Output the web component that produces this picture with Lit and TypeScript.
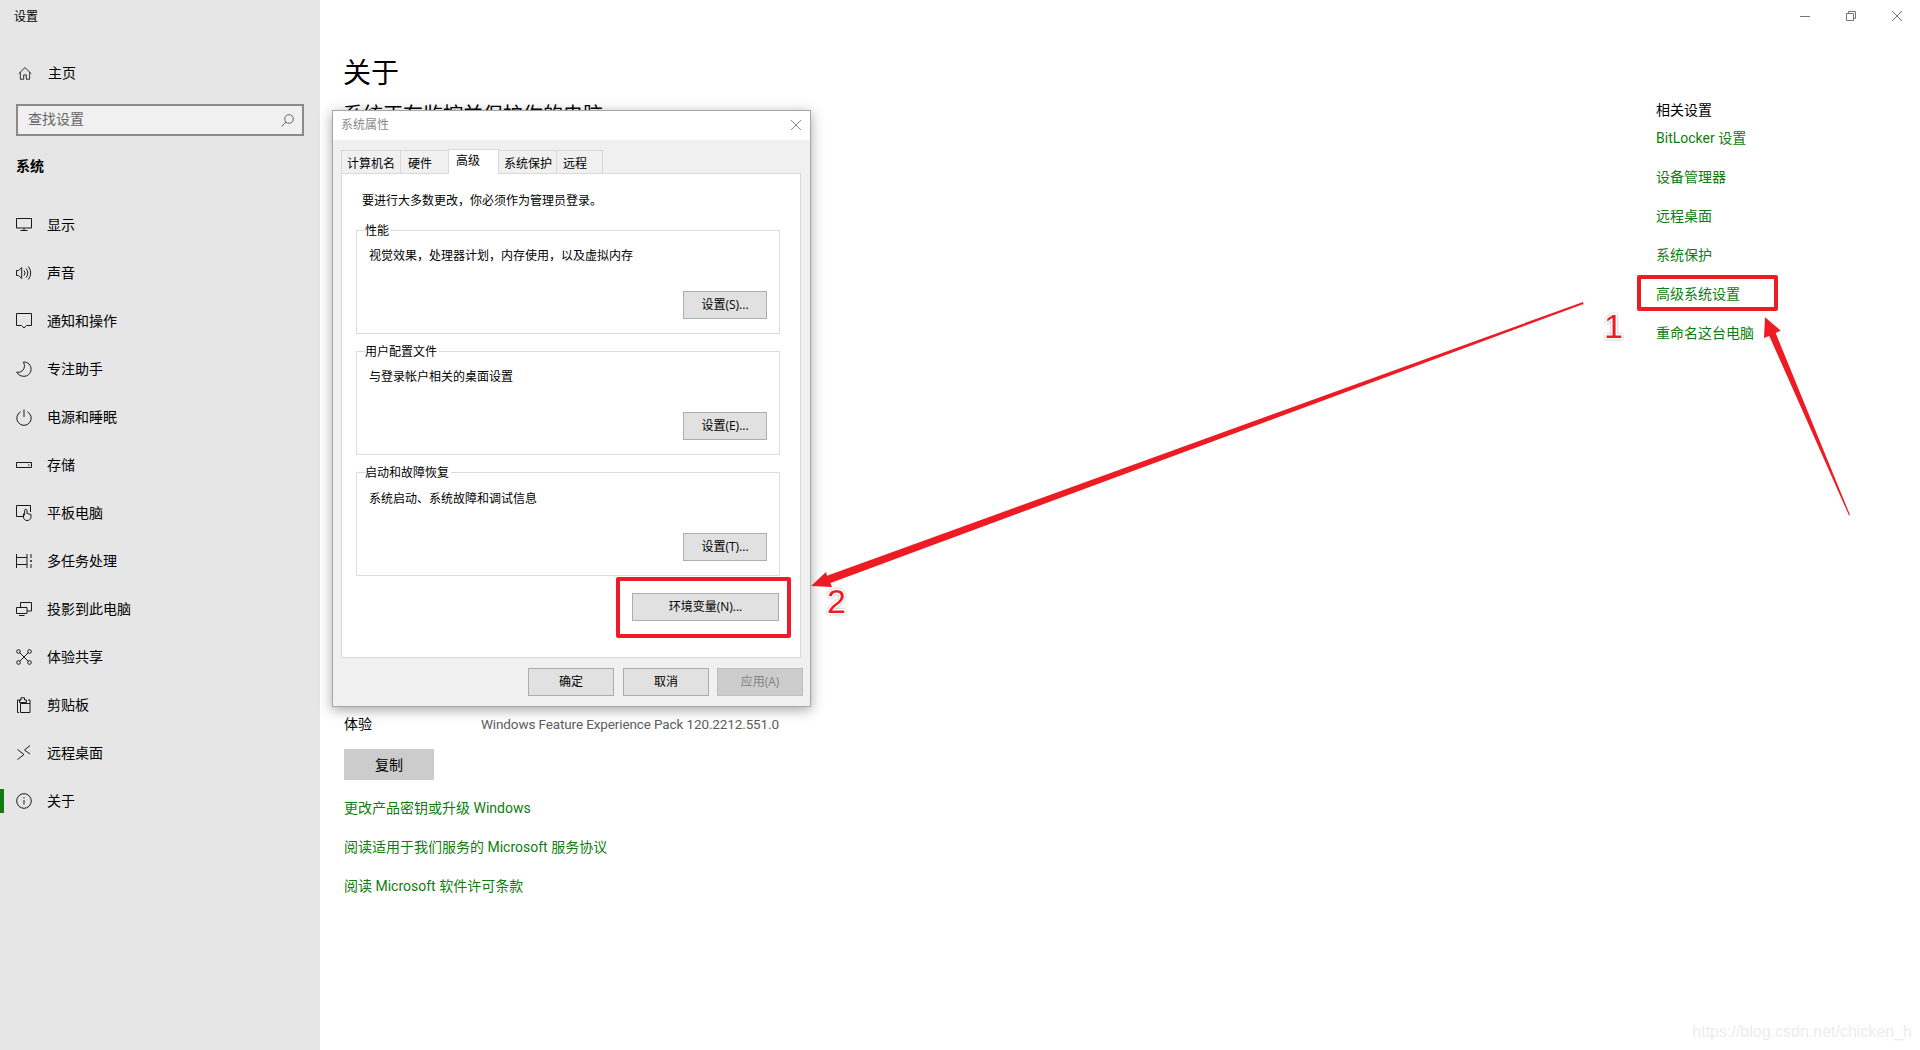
import { LitElement, html, css, svg } from "lit";
import { customElement } from "lit/decorators.js";

const s = (c: unknown) => html`<svg class="ico" viewBox="0 0 16 16">${c}</svg>`;

const icons: Record<string, unknown> = {
  home: s(svg`<path d="M.8 8.2 8 1.2l7.2 7M2.7 6.6v8h3.8V9.6h3v5h3.8v-8"/>`),
  display: s(svg`<path d="M.5 1.5h15v9.5H.5zM8 11v2.5M4.5 13.5h7"/>`),
  sound: s(svg`<path d="M.5 5.5h2.2l3-3v11l-3-3H.5zM8 5.5a3.6 3.6 0 0 1 0 5M10 3.5a6.6 6.6 0 0 1 0 9M12.3 1.5a10 10 0 0 1 0 13"/>`),
  notify: s(svg`<path d="M.5.5h15v12h-5l-2.5 2.5-2.5-2.5h-5z"/>`),
  moon: s(svg`<path d="M7.5 1c4.4-.2 7.8 3.2 7.6 7.4-.2 4-3.4 7-7.4 6.9-3 0-5.6-1.6-7-4.2 5 1.3 9.800-3.600 6.800-10.100z"/>`),
  power: s(svg`<path d="M8 .5v7.500M4.600 2.800a7.200 7.200 0 1 0 6.800 0"/>`),
  storage: s(svg`<path d="M.5 5.500h15v5H.5zM12 8h1.500"/>`),
  tablet: s(svg`<path d="M8 11.500H.5V.5h14v6.500M7.500 8.500v3.500c0 2 1.500 3.500 3.500 3.500s4-1 4-3.500V9.500l-4-1V5.500a1.200 1.200 0 0 0-2.400 0v5"/>`),
  multi: s(svg`<path d="M.5 1v3.500h10.500V1M.5 15v-3.500h10.500V15M.5 4.500v7M11 4.500v7M15 1v4M15 11v4"/><circle cx="15" cy="8" r="1" fill="#1a1a1a" stroke="none"/>`),
  project: s(svg`<path d="M4.500 6V1.500h11v8.500H11M.5 6.500h10.500v6H.5zM3 14.500h5.500"/>`),
  share: s(svg`<circle cx="2.500" cy="2.500" r="1.800"/><circle cx="13.500" cy="2.500" r="1.800"/><circle cx="2.500" cy="13.500" r="1.800"/><circle cx="13.500" cy="13.500" r="1.800"/><path d="m3.800 3.800 8.400 8.400M12.200 3.800l-8.400 8.400"/>`),
  clip: s(svg`<path d="M5 3H1.500v12.500H3M5 .8h3.500V3H10.500v2.500H3.500V3H5zM12 3h2v12.500H4.500V6.500H14"/>`),
  remote: s(svg`<path d="M1.500 4.500 8 9.500l-6.500 5M14 .5 8.500 5 14 9"/>`),
  info: s(svg`<circle cx="8" cy="8" r="7.300"/><path d="M8 7v4.500M8 4.200v1.300"/>`),
};

const nav = [
  ["display", "显示"], ["sound", "声音"], ["notify", "通知和操作"], ["moon", "专注助手"],
  ["power", "电源和睡眠"], ["storage", "存储"], ["tablet", "平板电脑"], ["multi", "多任务处理"],
  ["project", "投影到此电脑"], ["share", "体验共享"], ["clip", "剪贴板"], ["remote", "远程桌面"], ["info", "关于"],
];

const tabs = [
  ["计算机名", 60], ["硬件", 48], ["高级", 51], ["系统保护", 58], ["远程", 46],
] as const;

const groups = [
  ["性能", "视觉效果，处理器计划，内存使用，以及虚拟内存", "设置(S)..."],
  ["用户配置文件", "与登录帐户相关的桌面设置", "设置(E)..."],
  ["启动和故障恢复", "系统启动、系统故障和调试信息", "设置(T)..."],
];

@customElement("app-root")
export class AppRoot extends LitElement {
  static styles = css`
    :host {
      display: block; position: relative; width: 1920px; height: 1050px; overflow: hidden; background: #fff;
      font-family: Roboto, "Noto Sans CJK SC", sans-serif; font-size: 14px; color: #000;
    }
    .app { display: flex; height: 1050px; }
    .side { width: 320px; flex: none; background: #e6e6e6; display: flex; flex-direction: column; }
    .app-title { height: 33px; padding: 1px 0 0 14px; box-sizing: border-box; font-size: 12px; line-height: 33px; }
    .row { height: 48px; display: flex; align-items: center; padding-left: 16px; position: relative; line-height: 20px; }
    .home { padding-left: 18px; height: 48px; margin-top: 16px; }
    .home .ico { width: 14px; height: 15px; margin-right: 16px; }
    .ico { width: 16px; height: 16px; flex: none; margin-right: 15px; fill: none; stroke: #1a1a1a; stroke-width: 1; overflow: visible; }
    .search {
      margin: 7px 16px 0; height: 32px; box-sizing: border-box; border: 2px solid #8a8a8a; background: #f0f0f0;
      display: flex; align-items: center; justify-content: space-between; padding: 0 8px 2px 10px; color: #666; line-height: 20px;
    }
    .search .ico { margin: 2px 0 0; width: 13px; height: 13px; stroke: #666; }
    .group-title { margin: 18px 0 23px 16px; font-weight: 700; line-height: 24px; }
    .row.active::before { content: ""; position: absolute; left: 0; top: 12px; width: 4px; height: 24px; background: #107c10; }

    .main { flex: 1; padding-left: 23px; display: flex; flex-direction: column; min-width: 0; }
    h1 { margin: 54px 0 0; font-size: 28px; font-weight: 400; line-height: 40px; }
    .sub { margin-top: 6px; font-size: 20px; line-height: 30px; }
    .exp { display: flex; margin: 582px 0 0 1px; line-height: 24px; }
    .exp span:first-child { width: 137px; }
    .exp span:last-child { color: #5d5d5d; font-size: 13.5px; letter-spacing: -0.12px; }
    .copy {
      margin: 13px 0 0 1px; width: 90px; height: 31px; padding-bottom: 2px; box-sizing: border-box; background: #ccc;
      display: flex; align-items: center; justify-content: center;
    }
    .links { display: flex; flex-direction: column; margin: 16px 0 0 1px; }
    .link { color: #107c10; height: 39px; line-height: 24px; }

    .aside { width: 264px; flex: none; display: flex; flex-direction: column; }
    .controls { display: flex; justify-content: flex-end; height: 32px; }
    .controls div { width: 46px; display: flex; align-items: center; justify-content: center; }
    .controls svg { width: 10px; height: 10px; fill: none; stroke: #777; stroke-width: 1; overflow: visible; }
    .aside h2 { margin: 66px 0 4px; font-size: 14px; font-weight: 400; line-height: 24px; }

    .dialog {
      position: absolute; left: 332px; top: 110px; width: 479px; height: 597px; box-sizing: border-box;
      border: 1px solid #a6a6a6; background: #f0f0f0; box-shadow: 0 3px 12px rgba(0,0,0,.35);
      display: flex; flex-direction: column; font-size: 12px; font-family: "Open Sans", "Noto Sans CJK SC", sans-serif;
    }
    .dtitle { height: 29px; box-sizing: border-box; padding: 0 9px 3px 8px; flex: none; background: #fff; display: flex; align-items: center; justify-content: space-between; color: #8a8a8a; }
    .dtitle svg { width: 10px; height: 10px; fill: none; stroke: #8a8a8a; overflow: visible; margin-top: 2px; }
    .tabs { display: flex; align-items: flex-end; height: 24px; margin: 9px 0 0 8px; flex: none; position: relative; z-index: 1; }
    .tab {
      height: 23px; box-sizing: border-box; border: 1px solid #d9d9d9; border-left-width: 0; border-bottom-width: 0; background: #f0f0f0;
      padding: 4px 0 0 6px; line-height: 18px;
    }
    .tab:first-child { border-left-width: 1px; padding-left: 5px; }
    .tab:nth-child(2) { padding-left: 7px; }
    .tab:nth-child(4) { padding-left: 5px; }
    .tab.on { height: 25px; background: #fff; margin-bottom: -1px; padding: 2px 0 0 7px; border-left-width: 1px; margin-left: -1px; }
    .panel {
      margin: 0 9px 0 8px; flex: none; height: 485px; box-sizing: border-box; background: #fff; border: 1px solid #d9d9d9; padding: 0 20px 0 14px;
      display: flex; flex-direction: column;
    }
    .note { margin: 18px 0 0 6px; line-height: 18px; height: 38px; }
    .gbox {
      position: relative; height: 104px; box-sizing: border-box; border: 1px solid #dcdcdc; margin-bottom: 17px;
      padding: 16px 12px 14px 12px; display: flex; flex-direction: column; justify-content: space-between; line-height: 18px;
    }
    .gbox:nth-child(4) { padding-top: 17px; }
    .legend { position: absolute; left: 8px; top: -9px; background: #fff; padding: 0 2px 0 0; line-height: 18px; }
    .btn {
      box-sizing: border-box; height: 28px; background: #e1e1e1; border: 1px solid #adadad; display: flex; align-items: center; justify-content: center; line-height: 18px;
    }
    .gbox .btn { width: 84px; align-self: flex-end; }
    .env { width: 147px; align-self: flex-end; margin: 0 1px 0 0; }
    .foot { display: flex; justify-content: flex-end; gap: 8px; margin: 10px 7px 0 0; }
    .foot .btn { width: 86px; }
    .foot .btn:first-child { margin-right: 1px; }
    .foot .btn.off { background: #ccc; border-color: #bfbfbf; color: #838383; }

    .over { position: absolute; left: 0; top: 0; width: 1920px; height: 1050px; pointer-events: none; }
    .box { fill: none; stroke: #ed1c24; stroke-width: 4; stroke-linejoin: round; }
    .arrow { fill: #ed1c24; }
    .num {
      font-family: "Liberation Sans", sans-serif; font-size: 34px; fill: #ed1c24; stroke: #fff; stroke-width: 3; paint-order: stroke;
      filter: drop-shadow(0 0 1px #aaa);
    }
    .mark { position: absolute; right: 8px; top: 1021px; font-family: "Liberation Sans", sans-serif; font-size: 16px; line-height: 22px; color: #ececec; white-space: nowrap; }
  `;

  render() {
    return html`
      <div class="app">
        <nav class="side">
          <div class="app-title">设置</div>
          <div class="row home">${icons.home}<span>主页</span></div>
          <div class="search"><span>查找设置</span>
            <svg class="ico" viewBox="0 0 13 13"><circle cx="8" cy="5" r="4.300"/><path d="M5 8 .7 12.300"/></svg></div>
          <div class="group-title">系统</div>
          ${nav.map(([i, t]) => html`<div class="row ${t === "关于" ? "active" : ""}">${icons[i]}<span>${t}</span></div>`)}
        </nav>
        <main class="main">
          <h1>关于</h1>
          <div class="sub">系统正在监控并保护你的电脑。</div>
          <div class="exp"><span>体验</span><span>Windows Feature Experience Pack 120.2212.551.0</span></div>
          <div class="copy">复制</div>
          <div class="links">
            <div class="link">更改产品密钥或升级 Windows</div>
            <div class="link">阅读适用于我们服务的 Microsoft 服务协议</div>
            <div class="link">阅读 Microsoft 软件许可条款</div>
          </div>
        </main>
        <aside class="aside">
          <div class="controls">
            <div><svg viewBox="0 0 10 10"><path d="M0 5.500h10"/></svg></div>
            <div><svg viewBox="0 0 10 10"><path d="M.5 2.500h7v7h-7zM2.500 2.500V.5h7v7h-2"/></svg></div>
            <div><svg viewBox="0 0 10 10"><path d="m0 0 10 10M10 0 0 10"/></svg></div>
          </div>
          <h2>相关设置</h2>
          ${["BitLocker 设置", "设备管理器", "远程桌面", "系统保护", "高级系统设置", "重命名这台电脑"].map(
            (t) => html`<div class="link">${t}</div>`)}
        </aside>
      </div>

      <section class="dialog">
        <div class="dtitle"><span>系统属性</span><svg viewBox="0 0 10 10"><path d="m0 0 10 10M10 0 0 10"/></svg></div>
        <div class="tabs">
          ${tabs.map(([t, w]) => html`<div class="tab ${t === "高级" ? "on" : ""}" style="width:${w}px">${t}</div>`)}
        </div>
        <div class="panel">
          <div class="note">要进行大多数更改，你必须作为管理员登录。</div>
          ${groups.map(([l, d, b]) => html`<div class="gbox"><span class="legend">${l}</span><span>${d}</span><div class="btn">${b}</div></div>`)}
          <div class="btn env">环境变量(N)...</div>
        </div>
        <div class="foot">
          <div class="btn">确定</div><div class="btn">取消</div><div class="btn off">应用(A)</div>
        </div>
      </section>

      <svg class="over" viewBox="0 0 1920 1050">
        <rect class="box" x="1639" y="277" width="137" height="32"/>
        <rect class="box" x="618" y="579" width="171" height="57"/>
        <polygon class="arrow" points="1583,302 827,575.700 826,572 811,586 832,587 830.500,583 1583.500,304"/>
        <polygon class="arrow" points="1850,515 1775.700,333.100 1780.700,330.700 1765,317.300 1764,338 1769.300,335.900 1849,515.500"/>
        <text class="num" x="1604" y="338">1</text>
        <text class="num" x="827" y="613">2</text>
      </svg>
      <div class="mark">https://blog.csdn.net/chicken_h</div>
    `;
  }
}
